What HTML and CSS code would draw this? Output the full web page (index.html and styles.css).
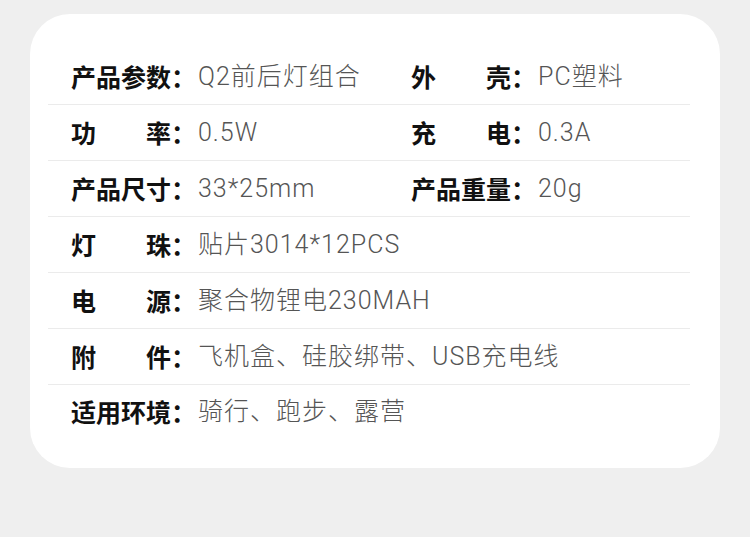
FILE: index.html
```html
<!DOCTYPE html>
<html lang="zh-CN">
<head>
    <meta charset="UTF-8">
    <meta name="viewport" content="width=device-width, initial-scale=1.0">
    <title>产品参数</title>
    <link rel="stylesheet" href="styles.css">
</head>
<body>

    <div class="card">
        <div class="row">
            <div class="item">
                <span class="label">产品参数</span><span class="colon">：</span><span class="value">Q2前后灯组合</span>
            </div>
            <div class="item">
                <span class="label">外壳</span><span class="colon">：</span><span class="value">PC塑料</span>
            </div>
        </div>
        <div class="row">
            <div class="item">
                <span class="label">功率</span><span class="colon">：</span><span class="value">0.5W</span>
            </div>
            <div class="item">
                <span class="label">充电</span><span class="colon">：</span><span class="value">0.3A</span>
            </div>
        </div>
        <div class="row">
            <div class="item">
                <span class="label">产品尺寸</span><span class="colon">：</span><span class="value">33*25mm</span>
            </div>
            <div class="item">
                <span class="label">产品重量</span><span class="colon">：</span><span class="value">20g</span>
            </div>
        </div>
        <div class="row">
            <div class="item">
                <span class="label">灯珠</span><span class="colon">：</span><span class="value">贴片3014*12PCS</span>
            </div>
        </div>
        <div class="row">
            <div class="item">
                <span class="label">电源</span><span class="colon">：</span><span class="value">聚合物锂电230MAH</span>
            </div>
        </div>
        <div class="row">
            <div class="item">
                <span class="label">附件</span><span class="colon">：</span><span class="value">飞机盒、硅胶绑带、USB充电线</span>
            </div>
        </div>
        <div class="row last">
            <div class="item">
                <span class="label">适用环境</span><span class="colon">：</span><span class="value">骑行、跑步、露营</span>
            </div>
        </div>
    </div>

</body>
</html>
```

FILE: styles.css
```css
/* Tabla de parámetros del producto */
body {
    margin: 0;
    background-color: #efefef;
    font-family: "Noto Sans CJK SC", "Noto Sans", sans-serif;
}

.card {
    background-color: #fff;
    margin: 14px 30px 0 30px;
    width: 690px;
    height: 454px;
    box-sizing: border-box;
    border-radius: 40px;
    padding: 35px 30px 0 18px;
}

.row {
    display: flex;
    height: 56px;
    align-items: center;
    border-bottom: 1px solid #ebebeb;
    box-sizing: border-box;
    padding-left: 23px;
}

.row.last {
    border-bottom: none;
    padding-bottom: 4px; /* el último renglón va un poco más arriba */
}

.item {
    width: 340px;
    flex-shrink: 0;
    display: flex;
    align-items: center;
    font-size: 25px;
    line-height: 1;
    white-space: nowrap;
}

.label {
    width: 100px;
    flex-shrink: 0;
    font-weight: 700;
    color: #111;
    text-align: justify;
    text-align-last: justify;
}

.colon {
    width: 25px;
    flex-shrink: 0;
    font-weight: 700;
    color: #111;
}

.value {
    color: #555;
    font-family: Roboto, "Noto Sans CJK SC", sans-serif;
    font-weight: 300;
    letter-spacing: 1px;
    padding-left: 2px;
}
```
